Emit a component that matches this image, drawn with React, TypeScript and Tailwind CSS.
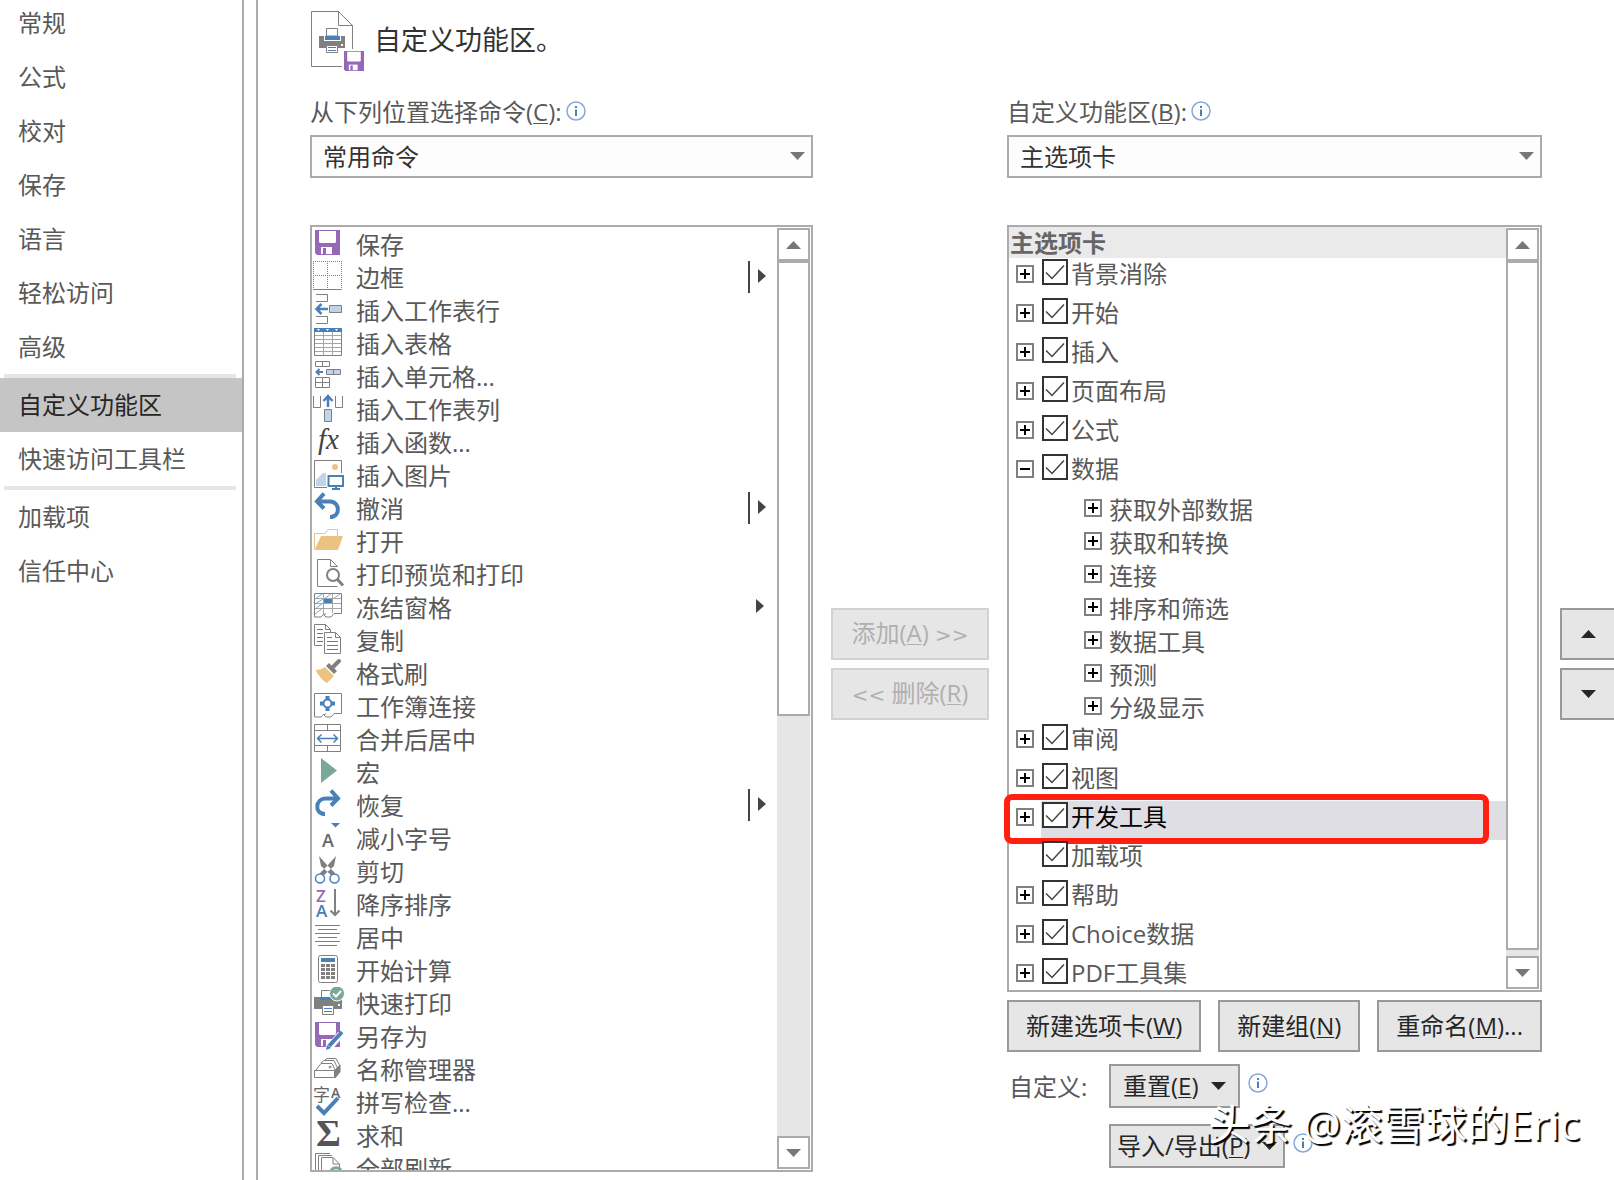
import { useState, type ReactNode } from "react";
import { clsx } from "clsx";

const GRAY = "#808080";
const BLUE = "#4a7fb8";
const PALE = "#c0d3e8";
const PURPLE = "#9668b8";
const GREEN = "#78a896";
const SAND = "#eac282";

function Floppy() {
  return (
    <>
      <path d="M2 2H27V27H4L2 25Z" fill={PURPLE} />
      <path d="M6 3H23V14L22 15H7L6 14Z" fill="#fff" />
      <path d="M8 19H19V26H8Z" fill="#fff" />
      <path d="M10 20H13V26H10Z" fill={PURPLE} />
    </>
  );
}

const icons: Record<string, ReactNode> = {
  save: <Floppy />,
  border: (
    <g fill="none" stroke={GRAY}>
      <path d="M0 .5H29M.5 0V28M28.5 0V28M14.5 0V28M0 14.5H29" strokeDasharray="1 1" />
      <path d="M0 28.5H29" />
    </g>
  ),
  insertRow: (
    <g fill="none" stroke={GRAY}>
      <path d="M3 .5H14.5V7.5H3M3 22.5H14.5V29.5H3" />
      <path d="M16.5 11.5H28.5V18.5H16.5Z" fill={PALE} />
      <path d="M15 15H4M8.5 10L3.5 15L8.5 20" stroke={BLUE} strokeWidth="2.5" />
    </g>
  ),
  table: (
    <g fill="none" stroke={GRAY}>
      <path d="M10.5 5V28M19.5 5V28M2 8.5H28M2 12.5H28M2 16.5H28M2 20.5H28M2 24.5H28" stroke="#a6a6a6" />
      <path d="M1.5 4V28.5H28.5V4" />
      <path d="M1 1H29V5H1Z" fill={BLUE} stroke="none" />
      <path d="M4 2H7L5.5 4ZM13 2H16L14.5 4ZM22 2H25L23.5 4Z" fill="#fff" stroke="none" />
    </g>
  ),
  insertCells: (
    <g fill="none" stroke={GRAY}>
      <path d="M2.5 1.5H16.5V6.5H2.5ZM9.5 1.5V6.5M2.5 17.5H16.5V27.5H2.5ZM9.5 17.5V27.5M2.5 22.5H16.5" />
      <path d="M13.5 9.5H27.5V14.5H13.5ZM20.5 9.5V14.5" fill={PALE} />
      <path d="M10 12H4M6.5 9L3.5 12L6.5 15" stroke={BLUE} strokeWidth="2" />
    </g>
  ),
  insertColumn: (
    <g fill="none" stroke={GRAY}>
      <path d="M.5 3V14.5H7.5V3M22.5 3V14.5H29.5V3" />
      <path d="M11.5 16.5H18.5V28.5H11.5Z" fill={PALE} />
      <path d="M15 14V4M10.5 8L15 3L19.5 8" stroke={BLUE} strokeWidth="2.5" />
    </g>
  ),
  fx: (
    <text x="5" y="23" fontSize="29" fontStyle="italic" fontFamily="Liberation Serif" fill="#444">
      fx
    </text>
  ),
  picture: (
    <g fill="none" stroke={GRAY}>
      <path d="M14 28.5H1.5V1.5H28.5V14" />
      <circle cx="22" cy="8" r="3" fill="#edc47d" stroke="none" />
      <path d="M3 27V21L10 14H13V27Z" fill={PALE} stroke="none" />
      <path d="M15.5 17H30V27H15.5ZM19 30H27M23 28V30" stroke={BLUE} strokeWidth="2" />
    </g>
  ),
  undo: (
    <g fill="none" stroke={BLUE} strokeWidth="4">
      <path d="M5 9.5H17C27 9.5 28 25 17 25" />
      <path d="M11 1.5L4 9.5L11 16.5" />
    </g>
  ),
  open: (
    <g>
      <path d="M1.5 24V8.5H12L15 4.5H24.5V11" fill="none" stroke={SAND} />
      <path d="M8 11H30L25 25H1.5Z" fill={SAND} />
    </g>
  ),
  preview: (
    <g fill="none" stroke={GRAY}>
      <path d="M24.5 28.5H4.5V1.5H17.5L24.5 8.5M17.5 1.5V8.5H24.5" />
      <circle cx="20" cy="17" r="6" strokeWidth="2" fill="#fff" />
      <path d="M24.5 21.5L30 27.5" strokeWidth="3" />
    </g>
  ),
  freeze: (
    <g fill="none" stroke={GRAY}>
      <path d="M10.5 3V23M19.5 3V22M2 7.5H28M2 12.5H28M2 17.5H28" stroke="#a6a6a6" />
      <path d="M2 8L9 3M11 8L18 3M20 8L27 3M2 13L10 8M2 18L10 12M2 23L10 17" stroke="#7ea6d0" />
      <path d="M11 8H19V12H11Z" fill={BLUE} stroke="none" />
      <path d="M1.5 2.5H28.5V22.5H21L18 26H13L11 24L13 22.5M1.5 2.5V26H8L11 23" />
    </g>
  ),
  copy: (
    <g fill="none" stroke={GRAY}>
      <path d="M9 21.5H1.5V.5H12.5L17.5 5.5V8M12.5 .5V5.5H17" />
      <path d="M11.5 8.5H22.5L27.5 13.5V29.5H11.5ZM22.5 8.5V13.5H27.5" fill="#fff" />
      <path
        d="M4 5.5H10M4 9.5H10M4 13.5H10M4 17.5H10M14 13.5H19M14 17.5H25M14 21.5H25M14 25.5H25"
        stroke={BLUE}
      />
    </g>
  ),
  brush: (
    <g>
      <path d="M2.5 13Q8 13 12 10L21 19L14 26Q7 22 2.5 13Z" fill="#edc47d" />
      <path d="M13 9L16 6L24 14L21 17Z" fill={GRAY} />
      <path d="M19 11L26 4" stroke={GRAY} strokeWidth="4" strokeLinecap="round" />
    </g>
  ),
  connections: (
    <g fill="none" stroke={GRAY}>
      <path d="M1.5 3.5H28.5V23.5H21L18 27H13L11 25L13 23.5M1.5 3.5V27H8L11 24" />
      <circle cx="14.5" cy="13.5" r="4" stroke={BLUE} strokeWidth="2" />
      <path
        d="M12.5 6H16.5V9H12.5ZM12.5 18H16.5V21H12.5ZM7 11.5H10V15.5H7ZM19 11.5H22V15.5H19Z"
        fill={BLUE}
        stroke="none"
      />
    </g>
  ),
  merge: (
    <g fill="none" stroke={GRAY}>
      <path d="M1.5 1.5H27.5V28.5H1.5ZM1.5 7.5H27.5M1.5 22.5H27.5M14.5 1.5V7.5M14.5 22.5V28.5" />
      <path
        d="M5 15.5H24M8.5 11.5L4.5 15.5L8.5 19.5M20.5 11.5L24.5 15.5L20.5 19.5"
        stroke={BLUE}
        strokeWidth="1.5"
      />
    </g>
  ),
  macro: <path d="M8 2L24 14.5L8 27Z" fill={GREEN} />,
  redo: (
    <g fill="none" stroke={BLUE} strokeWidth="4">
      <path d="M24 9.5H13C2 9.5 1 25 12 25" />
      <path d="M18 1.5L25 9.5L18 16.5" />
    </g>
  ),
  shrinkFont: (
    <g>
      <path d="M18 1H27L22.5 5.5Z" fill={BLUE} />
      <text x="9" y="25" fontSize="18" fontWeight="600" fontFamily="Open Sans" fill="#666">
        A
      </text>
    </g>
  ),
  cut: (
    <g fill="none" stroke={BLUE} strokeWidth="1.5">
      <path d="M6 1L8 11L19 21L22 18L14 10ZM23 1L21 11L10 21L7 18L14 11Z" fill={GRAY} stroke="none" />
      <circle cx="7" cy="23.5" r="4.5" fill="#fff" />
      <circle cx="21.5" cy="23.5" r="4.5" fill="#fff" />
    </g>
  ),
  sortDesc: (
    <g fontSize="17" fontWeight="600" fontFamily="Open Sans">
      <text x="3" y="14" fill={PURPLE}>
        Z
      </text>
      <text x="3" y="29" fill={BLUE}>
        A
      </text>
      <path d="M22 1V27M17.5 22.5L22 27L26.5 22.5" fill="none" stroke={GRAY} strokeWidth="2" />
    </g>
  ),
  center: (
    <path
      d="M2 4.5H27M5 8.5H24M2 12.5H27M5 16.5H24M2 20.5H27M5 24.5H24"
      stroke={GRAY}
    />
  ),
  calculator: (
    <g>
      <rect x="5.5" y="1.5" width="19" height="27" rx="2" fill="none" stroke={GRAY} />
      <path d="M8 4H22V8H8Z" fill={BLUE} />
      <path d="M8 11.5H22M8 15.5H22M8 19.5H22M8 23.5H22" stroke={GRAY} strokeWidth="3" strokeDasharray="4 1" />
    </g>
  ),
  quickPrint: (
    <g>
      <path d="M1 10H29V22H1Z" fill={GRAY} />
      <path d="M8.5 3.5H20.5V12H8.5Z" fill="#fff" stroke={GRAY} />
      <path d="M7 10H22V13H7Z" fill={BLUE} />
      <path d="M9.5 18.5H20.5V27.5H9.5Z" fill="#fff" stroke={GRAY} />
      <path d="M11 21.5H19M11 24.5H19" stroke={BLUE} />
      <path d="M25 17H27V19H25Z" fill="#fff" />
      <circle cx="24" cy="6.5" r="7.5" fill={GREEN} stroke="#fff" />
      <path d="M20 6.5L23 9.5L28 4" fill="none" stroke="#fff" strokeWidth="2" />
    </g>
  ),
  saveAs: (
    <g>
      <Floppy />
      <path d="M15 29L28 14" stroke="#fff" strokeWidth="7" />
      <path d="M16 26L29 12" stroke={BLUE} strokeWidth="4" />
      <path d="M13 30L14 25L18 28Z" fill={BLUE} />
    </g>
  ),
  names: (
    <g fill="none" stroke={GRAY}>
      <path d="M1.5 17.5H21.5V24.5H1.5ZM3 17L8 10.5H19L22 17" />
      <path d="M8 10L11 7.5H21L25 16M12 7L14 5.5H23L27 13" />
      <path d="M22 17L27 12V19L22 25Z" fill={GRAY} />
      <circle cx="17" cy="14" r="1" />
    </g>
  ),
  spelling: (
    <g fontFamily="Open Sans, Noto Sans CJK SC" fill="#666">
      <text x="0" y="15" fontSize="17">
        字
      </text>
      <text x="18" y="12" fontSize="14" fontWeight="600">
        A
      </text>
      <path d="M4 20L11 27L25 12" fill="none" stroke={BLUE} strokeWidth="4" />
    </g>
  ),
  sum: (
    <text x="3" y="27" fontSize="38" fontWeight="700" fontFamily="Liberation Serif" fill="#555">
      Σ
    </text>
  ),
  refresh: (
    <g fill="none" stroke={GRAY}>
      <path d="M2.5 19V1.5H17M5.5 19V3.5H19M8.5 19V5.5H20L26.5 12V19M20 5.5V12H26" />
      <path d="M18 19A6 6 0 0 1 28 18" stroke={GREEN} strokeWidth="3" />
    </g>
  ),
};

type Command = { icon: string; label: string; menu?: "split" | "plain" };

const commands: Command[] = [
  { icon: "save", label: "保存" },
  { icon: "border", label: "边框", menu: "split" },
  { icon: "insertRow", label: "插入工作表行" },
  { icon: "table", label: "插入表格" },
  { icon: "insertCells", label: "插入单元格..." },
  { icon: "insertColumn", label: "插入工作表列" },
  { icon: "fx", label: "插入函数..." },
  { icon: "picture", label: "插入图片" },
  { icon: "undo", label: "撤消", menu: "split" },
  { icon: "open", label: "打开" },
  { icon: "preview", label: "打印预览和打印" },
  { icon: "freeze", label: "冻结窗格", menu: "plain" },
  { icon: "copy", label: "复制" },
  { icon: "brush", label: "格式刷" },
  { icon: "connections", label: "工作簿连接" },
  { icon: "merge", label: "合并后居中" },
  { icon: "macro", label: "宏" },
  { icon: "redo", label: "恢复", menu: "split" },
  { icon: "shrinkFont", label: "减小字号" },
  { icon: "cut", label: "剪切" },
  { icon: "sortDesc", label: "降序排序" },
  { icon: "center", label: "居中" },
  { icon: "calculator", label: "开始计算" },
  { icon: "quickPrint", label: "快速打印" },
  { icon: "saveAs", label: "另存为" },
  { icon: "names", label: "名称管理器" },
  { icon: "spelling", label: "拼写检查..." },
  { icon: "sum", label: "求和" },
  { icon: "refresh", label: "全部刷新" },
];

type Tab = { label: string; leaf?: boolean; groups?: string[] };

const tabs: Tab[] = [
  { label: "背景消除" },
  { label: "开始" },
  { label: "插入" },
  { label: "页面布局" },
  { label: "公式" },
  {
    label: "数据",
    groups: ["获取外部数据", "获取和转换", "连接", "排序和筛选", "数据工具", "预测", "分级显示"],
  },
  { label: "审阅" },
  { label: "视图" },
  { label: "开发工具" },
  { label: "加载项", leaf: true },
  { label: "帮助" },
  { label: "Choice数据" },
  { label: "PDF工具集" },
];

const sections = [
  ["常规", "公式", "校对", "保存", "语言", "轻松访问", "高级"],
  ["自定义功能区", "快速访问工具栏"],
  ["加载项", "信任中心"],
];

function Key({ children }: { children: string }) {
  return <u className="decoration-1 underline-offset-2">{children}</u>;
}

function Triangle({ up, className }: { up?: boolean; className?: string }) {
  return (
    <svg
      width="15"
      height="8"
      viewBox="0 0 15 8"
      className={clsx("shrink-0 fill-current", className)}
      aria-hidden="true"
    >
      <path d={up ? "M7.5 0L15 8H0Z" : "M0 0H15L7.5 8Z"} />
    </svg>
  );
}

function Info({ className }: { className?: string }) {
  return (
    <svg width="20" height="20" viewBox="0 0 20 20" className={clsx("shrink-0", className)} aria-hidden="true">
      <circle cx="10" cy="10" r="9" fill="#fff" stroke="#86a9d6" strokeWidth="1.5" />
      <path d="M9 5H11V7H9ZM9 8.5H11V15H9Z" fill={BLUE} />
    </svg>
  );
}

function PageIcon() {
  return (
    <svg width="54" height="61" viewBox="0 0 54 61" className="shrink-0" aria-hidden="true">
      <path
        d="M32 56.5H1.5V1.5H28.5L42.5 15.5V39M28.5 1.5V15.5H42.5"
        fill="none"
        stroke={GRAY}
      />
      <path d="M9 26H35V38H9Z" fill={GRAY} />
      <path d="M14 25H31V31H14Z" fill="#fff" />
      <path d="M16.5 18.5H27.5V26H16.5Z" fill="#fff" stroke={GRAY} />
      <path d="M15 26H30V30H15Z" fill={BLUE} />
      <path d="M16.5 35.5H27.5V42.5H16.5Z" fill="#fff" stroke={GRAY} />
      <path d="M18 37.5H26M18 40.5H26" stroke={BLUE} />
      <path d="M31 34H33V36H31Z" fill="#fff" />
      <g transform="translate(32.4 39.4) scale(.8)">
        <Floppy />
      </g>
    </svg>
  );
}

function Scrollbar({ thumb }: { thumb: string }) {
  return (
    <div className="my-px mr-px flex w-[33px] shrink-0 flex-col bg-[#e6e6e6] text-[#777]">
      <button
        aria-label="向上滚动"
        className="flex h-[33px] shrink-0 items-center justify-center border-2 border-[#ababab] bg-white"
      >
        <Triangle up />
      </button>
      <div className={clsx("border-2 border-[#ababab] bg-white", thumb)} />
      <button
        aria-label="向下滚动"
        className="mt-auto flex h-[33px] shrink-0 items-center justify-center border-2 border-[#ababab] bg-white"
      >
        <Triangle />
      </button>
    </div>
  );
}

type PickerProps = { id: string; label: string; accessKey: string; value: string };

function Picker({ id, label, accessKey, value }: PickerProps) {
  return (
    <>
      <div className="flex h-[34px] items-center gap-1">
        <label htmlFor={id} className="whitespace-nowrap">
          {label}(<Key>{accessKey}</Key>):
        </label>
        <Info className="-mt-0.5" />
      </div>
      <div className="relative mt-1.5 shrink-0">
        <select
          id={id}
          className="block h-[43px] w-full appearance-none border-2 border-[#ababab] bg-[#fdfdfd] px-[11px] text-[#333]"
        >
          <option>{value}</option>
        </select>
        <Triangle className="pointer-events-none absolute top-[17px] right-2 text-[#777]" />
      </div>
    </>
  );
}

function Expander({ open, label, onClick }: { open?: boolean; label: string; onClick?: () => void }) {
  return (
    <button
      aria-label={label}
      aria-expanded={!!open}
      onClick={onClick}
      className="mt-[7px] size-[18px] shrink-0 border-2 border-[#808080] bg-white"
    >
      <svg width="14" height="14" viewBox="0 0 14 14" aria-hidden="true">
        <path d={open ? "M2 7H12" : "M2 7H12M7 2V12"} stroke="#000" strokeWidth="2" />
      </svg>
    </button>
  );
}

function TabRow({ tab, selected, onSelect }: { tab: Tab; selected: boolean; onSelect: () => void }) {
  const [checked, setChecked] = useState(true);
  const [open, setOpen] = useState(!!tab.groups);

  return (
    <li className="relative">
      <div className="flex h-[39px] items-start pl-[7px]">
        {tab.leaf ? (
          <span className="w-[18px] shrink-0" />
        ) : (
          <Expander open={open} label={tab.label} onClick={() => setOpen(!open)} />
        )}
        <label
          onClick={onSelect}
          className={clsx("ml-[7px] flex h-[39px] flex-1 items-start pl-px", selected && "bg-[#dfdee4] text-black")}
        >
          <span className="relative mt-px block size-[26px] shrink-0">
            <input
              type="checkbox"
              checked={checked}
              onChange={() => setChecked(!checked)}
              className="block size-[26px] appearance-none border-2 border-[#333] bg-white"
            />
            {checked && (
              <svg viewBox="0 0 26 26" className="pointer-events-none absolute inset-0" aria-hidden="true">
                <path d="M4 13.5L10 19.5L22 6.5" fill="none" stroke="#444" strokeWidth="1.5" />
              </svg>
            )}
          </span>
          <span className="ml-[3px] leading-[32px]">{tab.label}</span>
        </label>
      </div>
      {open && tab.groups && (
        <ul>
          {tab.groups.map((group) => (
            <li key={group} className="flex h-[33px] items-start gap-[7px] pl-[75px]">
              <Expander label={group} />
              <span className="pt-1 leading-[28px]">{group}</span>
            </li>
          ))}
        </ul>
      )}
      {/* marker drawn round the developer tab */}
      {selected && (
        <div className="pointer-events-none absolute -top-[7px] right-[17px] -bottom-1 -left-[5px] rounded-lg border-6 border-[#ff2012]" />
      )}
    </li>
  );
}

const pushButton = "flex items-center border-2 border-[#999] bg-[#e6e6e6] whitespace-nowrap text-[#262626]";
const disabledButton = "h-[52px] border-2 border-[#d2d2d2] bg-[#e6e6e6] whitespace-nowrap text-[#b0b0b0]";
const moveButton = "flex h-[52px] items-center justify-center border-2 border-r-0 border-[#999] bg-[#e6e6e6] text-[#262626]";

export default function App() {
  const [page, setPage] = useState("自定义功能区");
  const [selectedTab, setSelectedTab] = useState("开发工具");

  return (
    <div className="relative flex h-screen overflow-hidden bg-white font-['Open_Sans','Noto_Sans_CJK_SC',sans-serif] text-[24px] leading-[34px] text-[#595959]">
      <nav className="-mt-1 w-[244px] shrink-0 border-r-2 border-[#ababab]">
        {sections.map((items, i) => (
          <div key={i}>
            {i > 0 && <div className="mr-1.5 ml-1 h-1 bg-[#e6e6e8]" />}
            {items.map((item) => (
              <button
                key={item}
                onClick={() => setPage(item)}
                className={clsx(
                  "block h-[54px] w-full pl-[18px] text-left",
                  page === item && "bg-[#c5c5c5] text-[#262626]",
                )}
              >
                {item}
              </button>
            ))}
          </div>
        ))}
      </nav>

      <main className="ml-3 flex min-w-0 flex-1 flex-col border-l-2 border-[#ababab] pt-2.5 pb-2 pl-[52px]">
        <header className="flex shrink-0 gap-2.5">
          <PageIcon />
          <h1 className="pt-[13px] text-[27px] text-[#333]">自定义功能区。</h1>
        </header>

        <div className="mt-6 flex min-h-0 flex-1 gap-[18px]">
          <section className="flex min-w-0 flex-[503] flex-col">
            <Picker id="source" label="从下列位置选择命令" accessKey="C" value="常用命令" />
            <div className="mt-[47px] flex min-h-0 flex-1 border-2 border-[#ababab]">
              <ul className="mt-px min-w-0 flex-1 overflow-hidden">
                {commands.map(({ icon, label, menu }) => (
                  <li key={icon} className="flex h-[33px] items-center pl-px">
                    <svg width="32" height="33" viewBox="0 0 32 33" className="shrink-0" aria-hidden="true">
                      {icons[icon]}
                    </svg>
                    <span className="ml-[11px] flex-1">{label}</span>
                    {menu && (
                      <svg
                        width="20"
                        height="33"
                        viewBox="0 0 20 33"
                        className={clsx("shrink-0", menu === "split" ? "mr-[9px]" : "mr-[11px]")}
                        aria-hidden="true"
                      >
                        {menu === "split" && <path d="M0 0H2V32H0Z" fill="#444" />}
                        <path d="M10 8L18 15L10 22Z" fill="#444" />
                      </svg>
                    )}
                  </li>
                ))}
              </ul>
              <Scrollbar thumb="h-[455px]" />
            </div>
          </section>

          <div className="flex w-[158px] shrink-0 flex-col gap-2 pt-[513px]">
            <button disabled className={disabledButton}>
              添加(<Key>A</Key>) <span className="font-['DejaVu_Sans'] text-[20px]">&gt;&gt;</span>
            </button>
            <button disabled className={disabledButton}>
              <span className="font-['DejaVu_Sans'] text-[20px]">&lt;&lt;</span> 删除(<Key>R</Key>)
            </button>
          </div>

          <section className="flex min-w-0 flex-[535] flex-col">
            <Picker id="target" label="自定义功能区" accessKey="B" value="主选项卡" />
            <div className="mt-[47px] flex min-h-0 flex-1 border-2 border-[#ababab]">
              <div className="-ml-[7px] min-w-0 flex-1 overflow-hidden pl-[7px]">
                <h2 className="h-[31px] bg-[#eaeaea] pl-px leading-[31px] font-bold text-[#666]">主选项卡</h2>
                <ul>
                  {tabs.map((tab) => (
                    <TabRow
                      key={tab.label}
                      tab={tab}
                      selected={selectedTab === tab.label}
                      onSelect={() => setSelectedTab(tab.label)}
                    />
                  ))}
                </ul>
              </div>
              <Scrollbar thumb="flex-1 mb-1.5" />
            </div>

            <div className="mt-2 flex shrink-0 justify-between">
              <button className={clsx(pushButton, "h-[52px] px-[17px]")}>
                <span>
                  新建选项卡(<Key>W</Key>)
                </span>
              </button>
              <button className={clsx(pushButton, "h-[52px] px-[17px]")}>
                <span>
                  新建组(<Key>N</Key>)
                </span>
              </button>
              <button className={clsx(pushButton, "h-[52px] px-[17px]")}>
                <span>
                  重命名(<Key>M</Key>)...
                </span>
              </button>
            </div>

            <div className="mt-3 mb-1 flex shrink-0 items-start">
              <span className="w-[102px] shrink-0 pt-1.5 pl-0.5">自定义:</span>
              <div className="flex flex-col gap-4">
                <div className="flex gap-2">
                  <button className={clsx(pushButton, "h-11 gap-3 px-3")}>
                    <span>
                      重置(<Key>E</Key>)
                    </span>
                    <Triangle />
                  </button>
                  <Info className="mt-[9px]" />
                </div>
                <div className="flex gap-2">
                  <button className={clsx(pushButton, "h-11 gap-3 px-1.5")}>
                    <span>
                      导入/导出(<Key>P</Key>)
                    </span>
                    <Triangle />
                  </button>
                  <Info className="mt-[9px]" />
                </div>
              </div>
            </div>
          </section>

          <div className="flex w-[54px] shrink-0 flex-col gap-2 pt-[513px]">
            <button aria-label="上移" className={moveButton}>
              <Triangle up />
            </button>
            <button aria-label="下移" className={moveButton}>
              <Triangle />
            </button>
          </div>
        </div>
      </main>

      <p className="pointer-events-none absolute right-[34px] bottom-[29px] text-[42px] leading-[54px] whitespace-nowrap text-white [text-shadow:2px_2px_1px_#000]">
        头条 @滚雪球的Eric
      </p>
    </div>
  );
}
